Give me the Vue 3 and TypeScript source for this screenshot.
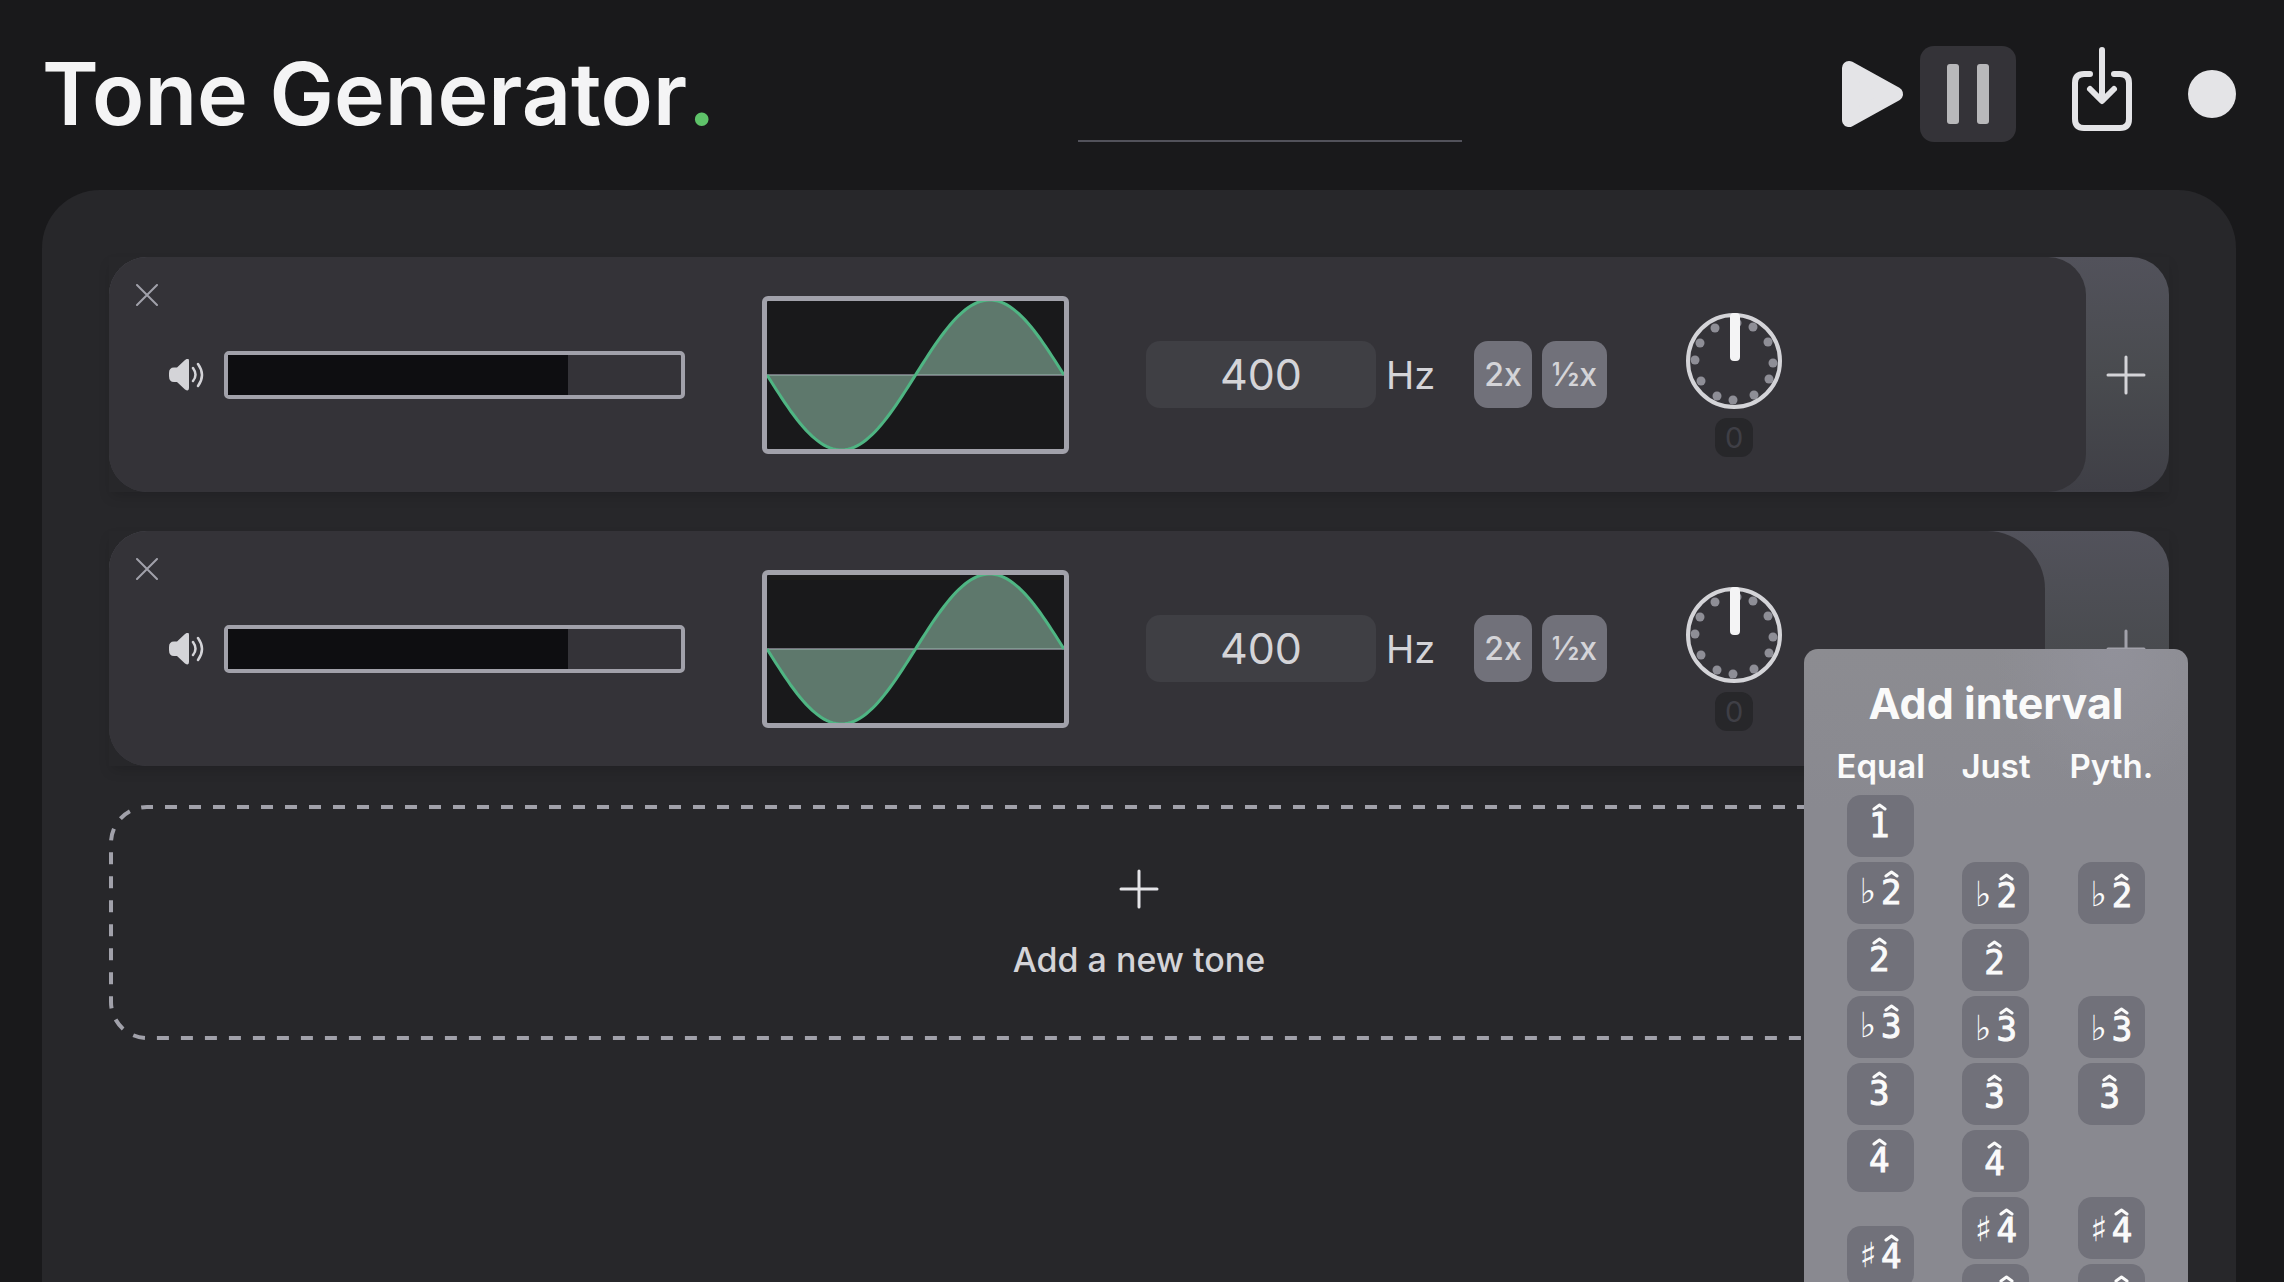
<script setup lang="ts">
import { ref } from 'vue'

interface Tone {
  id: number
  frequency: number
  volume: number
  pan: number
  menuOpen: boolean
}

interface Cell {
  degree: number
  accidental: string
  span: number
}

const tones = ref<Tone[]>([
  { id: 1, frequency: 400, volume: 75, pan: 0, menuOpen: false },
  { id: 2, frequency: 400, volume: 75, pan: 0, menuOpen: true },
])

const degree = (n: number, accidental = '', span = 1): Cell => ({ degree: n, accidental, span })

// Columns: equal temperament, just intonation, Pythagorean
const intervals: (Cell | null)[][] = [
  [degree(1), null, null],
  [degree(2, '♭'), degree(2, '♭'), degree(2, '♭')],
  [degree(2), degree(2), null],
  [degree(3, '♭'), degree(3, '♭'), degree(3, '♭')],
  [degree(3), degree(3), degree(3)],
  [degree(4), degree(4), null],
  [degree(4, '♯', 2), degree(4, '♯'), degree(4, '♯')],
  [degree(5, '♭'), degree(5, '♭')],
]

const points = Array.from({ length: 100 }, (_, i) => {
  const x = (i / 99) * 297
  const y = 74 + 75 * Math.sin((i / 99) * Math.PI * 2)
  return `${x.toFixed(1)} ${y.toFixed(1)}`
})
const wavePath = `M${points.join(' L')}`

const ticks = [
  [51, 10], [67, 14], [82, 29], [87, 50], [83, 66], [68, 82],
  [47, 87], [31, 83], [15, 68], [9, 47], [14, 30], [29, 15],
]

function addTone() {
  tones.value.push({ id: Date.now(), frequency: 400, volume: 75, pan: 0, menuOpen: false })
}
function removeTone(id: number) {
  tones.value = tones.value.filter((t) => t.id !== id)
}
</script>

<template>
  <div class="page">
    <header class="top">
      <h1>Tone Generator<span class="dot">.</span></h1>
      <div class="scope"></div>
      <div class="controls">
        <div class="transport">
          <button type="button" class="ctl" aria-label="Play">
            <svg width="96" height="96" viewBox="0 0 96 96">
              <path d="M25 22 L72 48 L25 74 Z" class="play" />
            </svg>
          </button>
          <button type="button" class="ctl active" aria-label="Pause">
            <svg width="96" height="96" viewBox="0 0 96 96">
              <rect x="27" y="18" width="12" height="60" rx="3" fill="#b8b8ba" />
              <rect x="57" y="18" width="12" height="60" rx="3" fill="#b8b8ba" />
            </svg>
          </button>
        </div>
        <button type="button" class="ctl" aria-label="Download">
          <svg width="96" height="96" viewBox="0 0 96 96" class="outline">
            <path d="M36 28 H30 Q21 28 21 37 V73 Q21 82 30 82 H66 Q75 82 75 73 V37 Q75 28 66 28 H60" />
            <path d="M48 4 V54 M36 43 L48 55 L60 43" />
          </svg>
        </button>
        <button type="button" class="record" aria-label="Record"></button>
      </div>
    </header>

    <main class="board">
      <section v-for="tone in tones" :key="tone.id" class="tone" :class="{ open: tone.menuOpen }">
        <div class="card">
          <div class="inner">
            <button type="button" class="close" aria-label="Remove tone" @click="removeTone(tone.id)">
              <svg width="22" height="22" viewBox="0 0 22 22">
                <path d="M1 1 L21 21 M21 1 L1 21" stroke="#a1a1aa" stroke-width="2" stroke-linecap="round" />
              </svg>
            </button>
            <div class="volume">
              <svg width="36" height="32" viewBox="0 0 36 32">
                <path
                  d="M8 8.5 L16 1 Q20 -2 20 2 V29 Q20 33 16 30.500 L8 23 H5 Q0 23 0 17 V14 Q0 8.500 5 8.500 Z"
                  fill="#d4d4d8"
                />
                <path
                  d="M24 9 Q29 16 24 22 M29 5 Q37 16 29 27"
                  fill="none"
                  stroke="#d4d4d8"
                  stroke-width="2.500"
                  stroke-linecap="round"
                />
              </svg>
              <div class="meter" role="meter" aria-label="Volume" :aria-valuenow="tone.volume">
                <div class="level" :style="{ width: tone.volume + '%' }"></div>
              </div>
            </div>
            <button type="button" class="wave" aria-label="Waveform: sine">
              <svg width="297" height="148" viewBox="0 0 297 148">
                <path d="M0 74 H297" stroke="#71717a" stroke-width="2" />
                <path :d="wavePath" fill="#86b09b" fill-opacity="0.63" stroke="#4fb583" stroke-width="3" />
              </svg>
            </button>
            <label class="freq">
              <input v-model.number="tone.frequency" type="text" inputmode="numeric" />
              <span>Hz</span>
            </label>
            <div class="multipliers">
              <button type="button" @click="tone.frequency *= 2">2x</button>
              <button type="button" @click="tone.frequency /= 2">½x</button>
            </div>
            <div class="pan">
              <svg width="96" height="96" viewBox="0 0 96 96" role="img" aria-label="Pan">
                <circle v-for="([x, y], i) in ticks" :key="i" :cx="x" :cy="y" r="4.500" fill="#8e8e96" />
                <circle cx="48" cy="48" r="46" fill="none" stroke="#d4d4d8" stroke-width="4" />
                <rect x="44" y="0" width="10" height="48" rx="4" fill="#f4f4f5" />
              </svg>
              <output>{{ tone.pan }}</output>
            </div>
          </div>
          <button type="button" class="add" aria-label="Add interval" @click="tone.menuOpen = !tone.menuOpen">
            <svg width="40" height="40" viewBox="0 0 40 40">
              <path d="M20 2 V38 M2 20 H38" />
            </svg>
          </button>
        </div>
        <div v-if="tone.menuOpen" class="menu">
          <h2>Add interval</h2>
          <table>
            <thead>
              <tr>
                <th>Equal</th>
                <th>Just</th>
                <th>Pyth.</th>
              </tr>
            </thead>
            <tbody>
              <tr v-for="(row, r) in intervals" :key="r">
                <td v-for="(cell, c) in row" :key="c" :rowspan="cell?.span ?? 1">
                  <button v-if="cell" type="button" :class="{ equal: c === 0 && r < 7 }">
                    <span v-if="cell.accidental" class="accidental">{{ cell.accidental }}</span>
                    <span class="degree">
                      <span>{{ cell.degree }}</span>
                      <svg class="hat" width="15" height="8" viewBox="0 0 15 8" aria-hidden="true">
                        <path d="M2 6 L7.500 2 L13 6" />
                      </svg>
                    </span>
                  </button>
                </td>
              </tr>
            </tbody>
          </table>
        </div>
      </section>

      <button type="button" class="new-tone" @click="addTone">
        <svg class="dashes" aria-hidden="true"><rect x="2" y="2" rx="36" /></svg>
        <svg width="40" height="40" viewBox="0 0 40 40">
          <path d="M20 2 V38 M2 20 H38" />
        </svg>
        <span>Add a new tone</span>
      </button>
    </main>
  </div>
</template>

<style>
html,
body {
  background: #19191b;
  height: 100%;
  overflow: hidden;
}
</style>

<style scoped>
* {
  box-sizing: border-box;
}
.page {
  font-family: Inter, sans-serif;
  color: #d4d4d8;
  background: #19191b;
  height: 100vh;
  overflow: hidden;
  padding: 0 48px 0 42px;
  display: flex;
  flex-direction: column;
}
button {
  font: inherit;
  color: inherit;
  border: 0;
  padding: 0;
  margin: 0;
  background: none;
  cursor: pointer;
}
svg {
  display: block;
  flex: none;
}
.top {
  height: 190px;
  padding-bottom: 2px;
  flex: none;
  display: flex;
  align-items: center;
  justify-content: space-between;
}
h1 {
  margin: 0;
  font-size: 86px;
  line-height: 96px;
  font-weight: 600;
  color: #f4f4f5;
}
.dot {
  margin-left: 1px;
  color: #5ec269;
}
.scope {
  width: 384px;
  height: 96px;
  border-bottom: 2px solid #52525b;
}
.controls {
  display: flex;
  align-items: center;
  gap: 38px;
}
.transport {
  display: flex;
}
.ctl {
  border-radius: 14px;
}
.active {
  background: #343338;
}
.play {
  fill: #e4e4e7;
  stroke: #e4e4e7;
  stroke-width: 14px;
  stroke-linejoin: round;
}
.outline {
  fill: none;
  stroke: #e4e4e7;
  stroke-width: 6px;
  stroke-linecap: round;
  stroke-linejoin: round;
}
.record {
  width: 48px;
  height: 48px;
  border-radius: 50%;
  background: #e4e4e7;
}
.board {
  flex: 1;
  background: #27272a;
  border-radius: 58px 58px 0 0;
  padding: 67px;
  display: flex;
  flex-direction: column;
  gap: 39px;
}
.tone {
  position: relative;
  box-shadow: 0 6px 12px -2px rgba(0, 0, 0, 0.15);
}
.open {
  z-index: 1;
}
.card {
  height: 235px;
  display: flex;
  border-radius: 38px;
  background: linear-gradient(#52525b, #494b4f 50%, #3f3f46);
}
.inner {
  flex: 1;
  position: relative;
  display: flex;
  align-items: center;
  padding-left: 60px;
  border-radius: 38px;
  background: #343338;
}
.open .inner {
  border-radius: 38px 58px 58px 38px;
}
.close {
  position: absolute;
  left: 27px;
  top: 27px;
}
.volume {
  display: flex;
  align-items: center;
  gap: 19px;
}
.meter {
  width: 461px;
  height: 48px;
  border: 4px solid #a1a1aa;
  border-radius: 5px;
}
.level {
  height: 100%;
  background: #0e0e11;
}
.wave {
  margin-left: 77px;
  border: 5px solid #a1a1aa;
  border-radius: 6px;
  background: #19191b;
}
.freq {
  margin-left: 77px;
  display: flex;
  align-items: center;
  gap: 10px;
  font-size: 38px;
}
.freq input {
  width: 230px;
  height: 67px;
  border: 0;
  padding: 0 0 2px;
  border-radius: 14px;
  background: #3f3f44;
  color: #d4d4d8;
  font: 43px Inter, sans-serif;
  text-align: center;
}
.multipliers {
  margin-left: 39px;
  display: flex;
  gap: 10px;
  font-size: 32px;
  font-weight: 500;
}
.multipliers button {
  height: 67px;
  padding: 0 10px 1px;
  border-radius: 14px;
  background: #71717a;
}
.pan {
  margin-left: 79px;
  padding-top: 20px;
  display: flex;
  flex-direction: column;
  align-items: center;
  gap: 9px;
}
output {
  width: 38px;
  height: 39px;
  border-radius: 12px;
  background: #27272a;
  color: #3f3f46;
  font-size: 29px;
  line-height: 39px;
  text-align: center;
}
.add {
  width: 83px;
  display: flex;
  align-items: center;
  justify-content: flex-end;
  padding-right: 23px;
}
.open .add {
  width: 124px;
}
.add path,
.new-tone path {
  stroke: #e4e4e7;
  stroke-width: 3px;
  stroke-linecap: round;
}
.add path {
  stroke: #d4d4d8;
}
.open .add path {
  stroke: #a1a1aa;
}
.menu {
  position: absolute;
  top: 118px;
  right: -19px;
  width: 384px;
  padding: 28px 19px 19px;
  border-radius: 14px;
  background:
    radial-gradient(120px 140px at 310px 0, #91919a, rgba(145, 145, 154, 0)),
    linear-gradient(#8c8c91, #898990 160px);
  color: #fafafa;
}
h2 {
  margin: 0;
  font-size: 43px;
  line-height: 52px;
  font-weight: 700;
  text-align: center;
}
table {
  width: 100%;
  table-layout: fixed;
  border-collapse: collapse;
}
th {
  padding: 8px 0 0;
  height: 66px;
  font-size: 33px;
  line-height: 40px;
  font-weight: 600;
  vertical-align: middle;
}
td {
  height: 67px;
  padding: 0;
  vertical-align: top;
}
td[rowspan='2'] {
  padding-bottom: 14px;
  vertical-align: middle;
}
td button {
  display: flex;
  align-items: baseline;
  justify-content: center;
  gap: 2px;
  width: 67px;
  height: 62px;
  padding: 13px 3px 0 0;
  margin: 0 auto;
  border-radius: 14px;
  background: #71717a;
  font: 34px 'DejaVu Sans Mono', monospace;
  line-height: 40px;
}
td .equal {
  padding-top: 10px;
}
.accidental {
  font-size: 37px;
}
.degree {
  display: grid;
  -webkit-text-stroke: 1px #fafafa;
}
.degree > * {
  grid-area: 1 / 1;
}
.hat {
  place-self: start center;
  margin-top: -2px;
  fill: none;
  stroke: #fafafa;
  stroke-width: 3px;
  stroke-linecap: round;
  stroke-linejoin: round;
}
.new-tone {
  position: relative;
  height: 235px;
  padding-top: 4px;
  flex: none;
  display: flex;
  flex-direction: column;
  align-items: center;
  justify-content: center;
  gap: 30px;
  font-size: 34px;
  line-height: 42px;
  font-weight: 500;
}
.dashes {
  position: absolute;
  inset: 0;
  width: 100%;
  height: 100%;
}
.dashes rect {
  width: calc(100% - 4px);
  height: calc(100% - 4px);
  fill: none;
  stroke: #a1a1aa;
  stroke-width: 4px;
  stroke-dasharray: 12 12;
  stroke-dashoffset: 6px;
}
</style>
